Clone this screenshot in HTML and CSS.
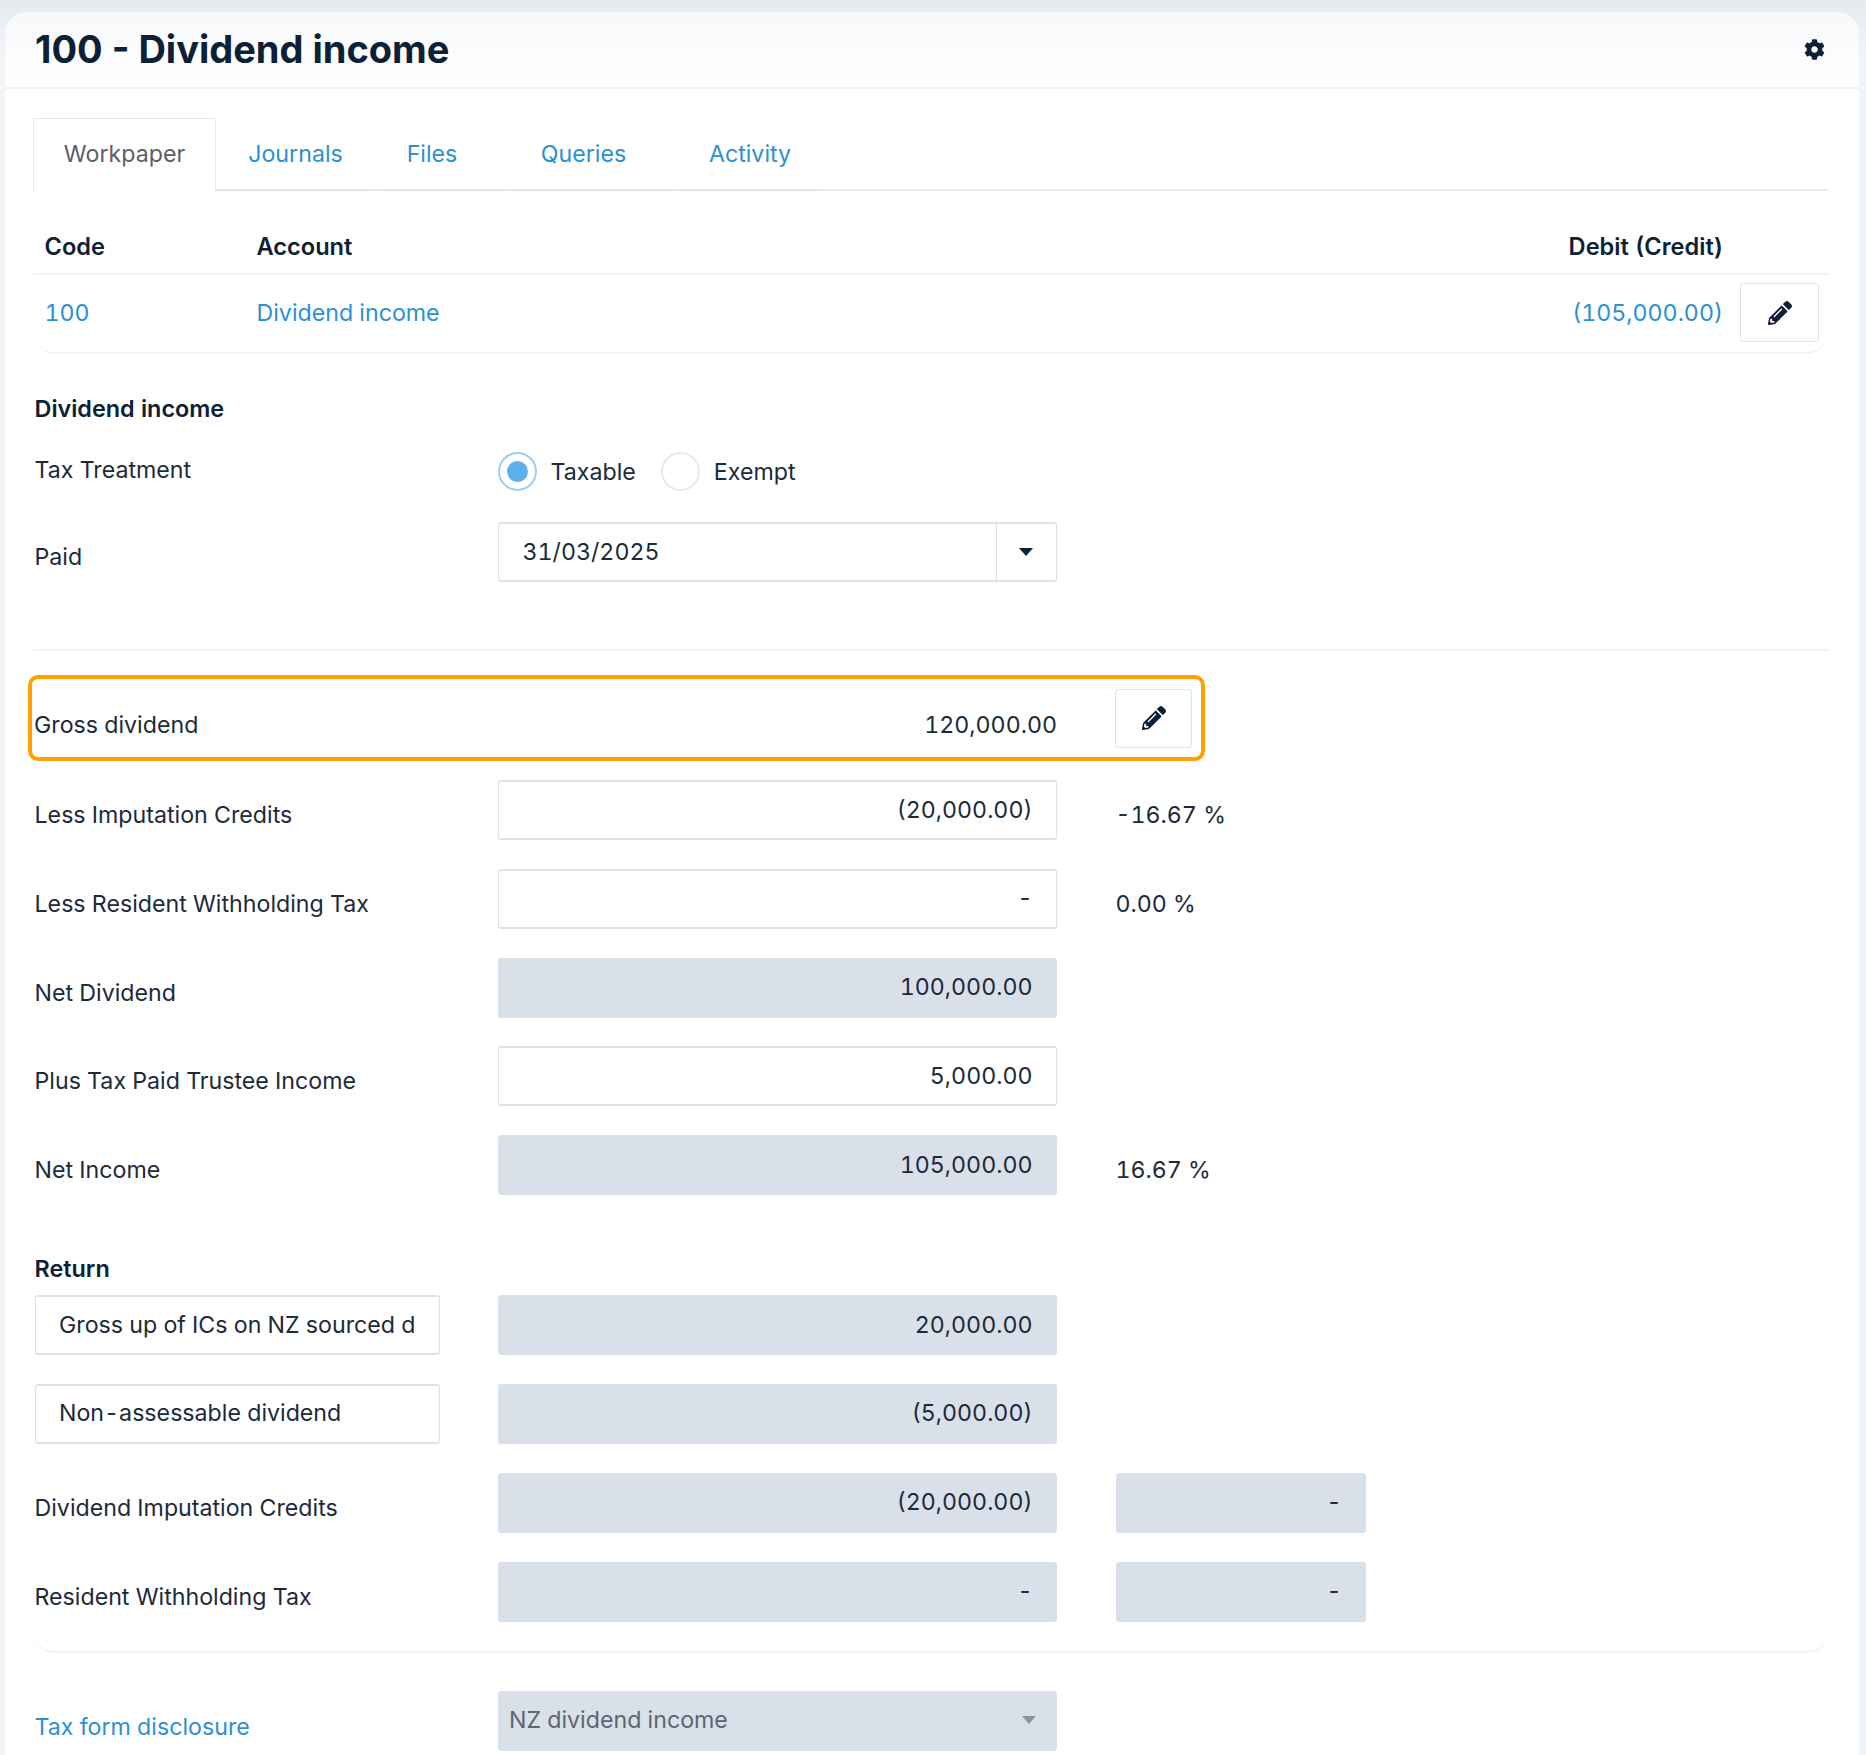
FILE: index.html
```html
<!DOCTYPE html>
<html lang="en">
<head>
<meta charset="utf-8">
<title>100 - Dividend income</title>
<link rel="stylesheet" href="styles.css">
</head>
<body>
<svg class="defs" width="0" height="0" aria-hidden="true">
  <symbol id="pencil" viewBox="0 0 512 512"><path d="M497.9 142.1l-46.1 46.1c-4.7 4.7-12.3 4.7-17 0l-111-111c-4.7-4.7-4.7-12.3 0-17l46.1-46.1c18.7-18.7 49.1-18.7 67.9 0l60.1 60.1c18.8 18.7 18.8 49.1 0 67.9zM284.2 99.8L21.6 362.4.4 483.9c-2.9 16.4 11.4 30.6 27.8 27.8l121.5-21.3 262.6-262.6c4.7-4.7 4.7-12.3 0-17l-111-111c-4.8-4.7-12.4-4.7-17.1 0zM124.1 339.9c-5.5-5.5-5.5-14.3 0-19.8l154-154c5.5-5.5 14.3-5.5 19.8 0s5.5 14.3 0 19.8l-154 154c-5.5 5.5-14.3 5.5-19.8 0zM88 424h48v36.3l-64.5 11.3-31.1-31.1L51.7 376H88v48z"/></symbol>
</svg>
<main class="card">
  <header class="card-head">
    <h1>100 - Dividend income</h1>
    <svg class="gear" viewBox="0 0 512 512" aria-hidden="true"><path d="M487.4 315.7l-42.6-24.6c4.3-23.2 4.3-47 0-70.2l42.6-24.6c4.9-2.8 7.1-8.6 5.5-14-11.1-35.6-30-67.8-54.7-94.6-3.8-4.1-10-5.1-14.8-2.3L380.8 110c-17.9-15.4-38.5-27.3-60.8-35.1V25.8c0-5.6-3.9-10.5-9.4-11.7-36.7-8.2-74.3-7.8-109.2 0-5.5 1.2-9.4 6.1-9.4 11.7V75c-22.2 7.9-42.8 19.8-60.8 35.1L88.7 85.5c-4.9-2.8-11-1.9-14.8 2.3-24.7 26.7-43.6 58.9-54.7 94.6-1.7 5.4.6 11.2 5.5 14L67.3 221c-4.3 23.2-4.3 47 0 70.2l-42.6 24.6c-4.9 2.8-7.1 8.6-5.5 14 11.1 35.6 30 67.8 54.7 94.6 3.8 4.1 10 5.1 14.8 2.3l42.6-24.6c17.9 15.4 38.5 27.3 60.8 35.1v49.2c0 5.6 3.9 10.5 9.4 11.7 36.7 8.2 74.3 7.8 109.2 0 5.5-1.2 9.4-6.1 9.4-11.7v-49.2c22.2-7.9 42.8-19.8 60.8-35.1l42.6 24.6c4.9 2.8 11 1.9 14.8-2.3 24.7-26.7 43.6-58.9 54.7-94.6 1.5-5.5-.7-11.3-5.6-14.1zM256 336c-44.1 0-80-35.9-80-80s35.9-80 80-80 80 35.9 80 80-35.9 80-80 80z"/></svg>
  </header>
  <div class="card-body">
    <nav class="tabs">
      <span class="tab tab-active">Workpaper</span>
      <a class="tab tab-journals">Journals</a>
      <a class="tab tab-files">Files</a>
      <a class="tab tab-queries">Queries</a>
      <a class="tab tab-activity">Activity</a>
    </nav>

    <section class="account-table">
      <div class="table-row table-head">
        <span class="col-code">Code</span>
        <span class="col-account">Account</span>
        <span class="col-amount">Debit (Credit)</span>
      </div>
      <div class="table-row table-data">
        <a class="col-code">100</a>
        <a class="col-account">Dividend income</a>
        <a class="col-amount">(105,000.00)</a>
        <button class="icon-btn table-btn"><svg class="pencil"><use href="#pencil"/></svg></button>
      </div>
    </section>

    <h2 class="section-title first-title">Dividend income</h2>
    <div class="tax-row">
      <span class="label-top">Tax Treatment</span>
      <div class="radios">
        <span class="radio radio-on"></span><span class="radio-label">Taxable</span>
        <span class="radio"></span><span class="radio-label">Exempt</span>
      </div>
    </div>
    <div class="row paid-row">
      <span class="label">Paid</span>
      <div class="field date-field"><span class="date-value">31/03/2025</span><span class="date-btn"><i class="caret"></i></span></div>
    </div>

    <div class="calc-section">
      <div class="highlight">
        <span class="label gross-label">Gross dividend</span>
        <span class="gross-value">120,000.00</span>
        <button class="icon-btn gross-btn"><svg class="pencil"><use href="#pencil"/></svg></button>
      </div>
      <div class="rows calc-rows">
        <div class="row"><span class="label">Less Imputation Credits</span><div class="field">(20,000.00)</div><span class="pct pct-neg">-16.67 %</span></div>
        <div class="row"><span class="label">Less Resident Withholding Tax</span><div class="field">-</div><span class="pct">0.00 %</span></div>
        <div class="row"><span class="label">Net Dividend</span><div class="field filled">100,000.00</div></div>
        <div class="row"><span class="label">Plus Tax Paid Trustee Income</span><div class="field">5,000.00</div></div>
        <div class="row"><span class="label">Net Income</span><div class="field filled">105,000.00</div><span class="pct">16.67 %</span></div>
      </div>

      <h2 class="section-title return-title">Return</h2>
      <div class="rows">
        <div class="row"><div class="field name-field">Gross up of ICs on NZ sourced d</div><div class="field filled">20,000.00</div></div>
        <div class="row"><div class="field name-field">Non-assessable dividend</div><div class="field filled">(5,000.00)</div></div>
        <div class="row"><span class="label">Dividend Imputation Credits</span><div class="field filled">(20,000.00)</div><div class="field filled small-field">-</div></div>
        <div class="row"><span class="label">Resident Withholding Tax</span><div class="field filled">-</div><div class="field filled small-field">-</div></div>
      </div>
    </div>

    <div class="row disclosure-row">
      <a class="label link-label">Tax form disclosure</a>
      <div class="field filled select-field"><span>NZ dividend income</span><i class="caret caret-grey"></i></div>
    </div>
  </div>
</main>
</body>
</html>
```

FILE: styles.css
```css
* { box-sizing: border-box; }
html, body { margin: 0; height: 1755px; overflow: hidden; }
body {
  background: linear-gradient(#e5eaef 0, #e9edf2 12px, #f1f4f8 60px);
  font-family: Inter, "Liberation Sans", sans-serif;
  font-size: 23.2px;
  font-variant-numeric: tabular-nums;
  font-feature-settings: "tnum";
  color: #1c2a3a;
  padding: 12px 7px 0 5px;
}
a { color: #2c90d2; text-decoration: none; }
.defs { position: absolute; }
.card { background: #fff; border-radius: 22px 22px 0 0; height: 1743px; }
.card-head {
  height: 77px;
  border-bottom: 2px solid #eef1f4;
  background: linear-gradient(#f7f8fa, #fff);
  border-radius: 22px 22px 0 0;
  display: flex;
  align-items: center;
  justify-content: space-between;
  padding: 0 34px 0 30px;
}
h1 { margin: 0; font-size: 38px; font-weight: 700; color: #0d2136; position: relative; top: -1px; font-variant-numeric: normal; font-feature-settings: normal; }
.gear { width: 21px; height: 21px; fill: #0d2136; }
.card-body { padding: 29px 30px 0 28px; }

.tabs { display: flex; height: 73px; border-bottom: 2px solid #e9edf1; }
.tab { display: flex; align-items: center; justify-content: center; height: 73px; padding-bottom: 0; border-bottom: 2px solid #dfe5ea; }
.tab-active { width: 183px; color: #5a6066; background: #fff; border: 1px solid #e3e8ec; border-bottom: 0; border-radius: 4px 4px 0 0; padding-bottom: 2px; }
.tab-journals { width: 159px; }
.tab-files { width: 132px; margin-left: 2px; padding-right: 22px; }
.tab-queries { width: 165px; margin-left: 2px; padding-right: 20px; }
.tab-activity { width: 144px; margin-left: 2px; }

.account-table { border-bottom: 2px solid #f0f2f5; border-radius: 0 0 22px 22px; height: 163px; }
.table-row { display: flex; align-items: center; padding: 0 10px; position: relative; }
.table-head { height: 84px; padding: 28px 10px 0 11.5px; font-weight: 600; color: #0d2136; font-size: 23.6px; border-bottom: 2px solid #f1f3f5; }
.table-data { height: 77px; padding: 0 10px 2px 11.5px; }
.col-code { width: 212px; }
.col-account { flex: 1; }
.col-amount { margin-right: 96px; }
.table-btn { position: absolute; right: 10px; top: 8px; width: 78px; }

.icon-btn { width: 79px; height: 59px; background: #fff; border: 1px solid #dfe4e9; border-radius: 3px; display: flex; align-items: center; justify-content: center; padding: 0; }
.pencil { width: 24px; height: 24px; fill: #0d2136; }

.section-title { margin: 0; font-size: 23.4px; font-weight: 600; color: #0d2136; line-height: 28px; padding-left: 1.5px; }
.first-title { margin-top: 41px; }
.tax-row { display: flex; margin-top: 28px; height: 40px; align-items: center; padding-left: 1.5px; }
.label-top { width: 463px; position: relative; top: -1px; }
.radios { display: flex; align-items: center; }
.radio { width: 39px; height: 39px; border-radius: 50%; border: 2px solid #e6eaee; background: #fff; display: block; }
.radio-on { border-color: #9fcdf0; position: relative; }
.radio-on::after { content: ""; position: absolute; inset: 7px; border-radius: 50%; background: #5cb0ea; }
.radio-label { margin: 0 25px 0 14px; position: relative; top: 1px; }
.radio-label + .radio { margin-left: 0; }

.row { display: flex; align-items: flex-start; height: 60px; padding-left: 1.5px; }
.label { width: 463px; line-height: 60px; position: relative; top: 5px; }
.field {
  width: 559px; height: 60px; border: 1px solid #dde2e7; border-bottom-width: 2px; border-top-width: 2px; border-radius: 3px; background: #fff;
  display: flex; align-items: center; justify-content: flex-end; padding: 0 23px 1px 24px;
}
.filled { background: #d9e0ea; border-color: #d9e0ea; }
.paid-row { margin-top: 31px; }
.date-field { justify-content: space-between; padding: 0; }
.date-value { padding-left: 24px; }
.date-btn { width: 60px; height: 100%; border-left: 1px solid #dde2e7; display: flex; align-items: center; justify-content: center; }
.caret { display: block; width: 0; height: 0; border: 7.5px solid transparent; border-top: 8px solid #0d2136; border-bottom: 0; }
.caret-grey { border-top-color: #8a949e; }
.pct { margin-left: 59px; line-height: 60px; position: relative; top: 5px; }
.pct-neg { margin-left: 59px; }

.calc-section { margin-top: 67px; border-top: 2px solid #f0f2f5; border-bottom: 2px solid #f0f2f5; border-radius: 0 0 22px 22px; height: 1004px; padding-top: 24px; }
.highlight { display: flex; align-items: center; width: 1177px; height: 86px; margin-left: -5px; border: 4px solid #ffa100; border-radius: 10px; position: relative; padding-left: 2px; }
.gross-label { width: 464px; top: 7px; line-height: 30px; }
.gross-value { width: 559px; text-align: right; position: relative; top: 7px; }
.gross-btn { margin-left: 58px; position: relative; top: 0; width: 77px; }
.rows { display: flex; flex-direction: column; gap: 28.8px; }
.calc-rows { margin-top: 19px; }
.return-title { margin-top: 60px; margin-bottom: 12px; }
.name-field { width: 405px; margin-right: 58px; justify-content: flex-start; white-space: nowrap; overflow: hidden; padding-left: 23.5px; }
.small-field { width: 250px; margin-left: 59px; }
.disclosure-row { margin-top: 38px; }
.link-label { color: #2c90d2; top: 6px; }
.select-field { justify-content: space-between; padding: 0 20px 2px 10.5px; color: #5b6670; }
```
